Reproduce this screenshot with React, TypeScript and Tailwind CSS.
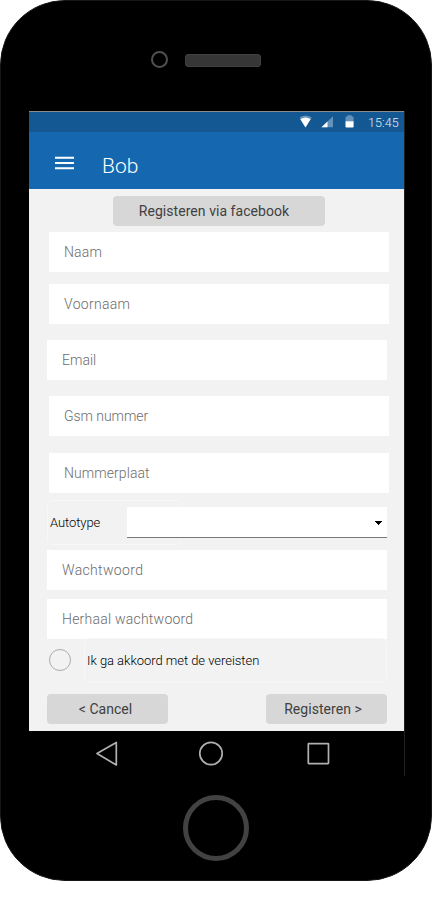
import React from "react";

function Field({ label, className }: { label: string; className: string }) {
  return (
    <div className={`flex h-10 w-[340px] shrink-0 items-center bg-white pl-[15px] text-[14px] font-light text-[#6c6c6c] ${className}`}>
      <span>{label}</span>
    </div>
  );
}

function StatusBar() {
  return (
    <div className="flex h-[21px] shrink-0 items-center justify-end border-t border-[#8c8c8c] bg-[#135892] pr-[5px] text-white">
      <svg width="69" height="20" viewBox="300 112 69 20">
        <path d="M299.2 117.6Q305.5 113.4 311.8 117.6L305.5 127Z" fill="#fff" opacity=".35" />
        <path d="M300.4 119.2Q305.5 116 310.6 119.2L305.5 127.5Z" fill="#fff" />
        <path d="M321.5 127.3L333 116.2V127.3Z" fill="#fff" opacity=".35" />
        <path d="M321.5 127.3L327.5 121.5V127.3Z" fill="#fff" />
        <path d="M345.5 121.5V117.5Q345.5 116.5 346.5 116.5H347.3V115.3H351.7V116.5H352.8Q353.6 116.5 353.6 117.5V121.5Z" fill="#fff" opacity=".35" />
        <path d="M345.5 121.2H353.6V126.5Q353.6 127.4 352.7 127.4H346.4Q345.5 127.4 345.5 126.5Z" fill="#fff" />
      </svg>
      <span className="-ml-[1px] mt-[2px] w-[31px] whitespace-nowrap text-[12.5px] font-light leading-[18px] tracking-[0.1px] text-[#e3edf5]">15:45</span>
    </div>
  );
}

export default function App() {
  return (
    <div className="h-[901px] w-[432px] overflow-hidden bg-white font-['Roboto',sans-serif]">
      <div className="flex h-[881px] w-[432px] flex-col rounded-[65px] border border-[#161616] bg-black">
        <header className="flex h-[110px] shrink-0 items-start pl-[150px] pt-[50px]">
          <div className="size-[17px] rounded-full border-[2.5px] border-[#505050]" />
          <div className="ml-[17px] mt-[3px] h-[13px] w-[76px] rounded-[3px] border border-[#414141] bg-[#363636]" />
        </header>

        <main className="ml-[28px] flex h-[665px] w-[376px] shrink-0 flex-col border-r border-[#222]">
          <StatusBar />
          <div className="flex h-[57px] shrink-0 items-center bg-[#1568b0] pl-[26px] text-white">
            <svg width="20" height="14" viewBox="0 0 20 14" className="mt-[4px]">
              <path d="M0 1.7H19M0 7H19M0 12.3H19" stroke="#fff" strokeWidth="2.1" />
            </svg>
            <span className="ml-[27px] mt-[11px] text-[21px] font-light leading-none">Bob</span>
          </div>

          <div className="flex h-[542px] shrink-0 flex-col items-start bg-[#f2f2f2] pl-[18px] pt-[7px]">
            <button className="ml-[66px] h-[30px] w-[212px] shrink-0 rounded-[4px] bg-[#d7d7d7] pr-[10px] text-[14px] tracking-[0.05px] text-[#404040]">
              Registeren via facebook
            </button>
            <Field label="Naam" className="ml-[2px] mt-[6px] tracking-[0.14px]" />
            <Field label="Voornaam" className="ml-[2px] mt-[12px] tracking-[0.3px]" />
            <Field label="Email" className="mt-[16px]" />
            <Field label="Gsm nummer" className="ml-[2px] mt-[16px] tracking-[-0.05px]" />
            <Field label="Nummerplaat" className="ml-[2px] mt-[17px] tracking-[0.07px]" />

            <div className="relative mt-[7px] flex h-[45px] w-[340px] shrink-0 items-center">
              <div className="absolute inset-y-0 left-0 w-[135px] rounded-[5px] border border-[#f7f7f7]" />
              <label className="flex h-[45px] w-[80px] items-center pl-[3px] text-[13px] font-light tracking-[-0.08px] text-black">
                Autotype
              </label>
              <div className="relative flex h-[31px] w-[260px] items-center justify-end border-b border-[#777] bg-white pr-[5px]">
                <svg width="7" height="4" viewBox="0 0 7 4" className="mt-[1px]" shapeRendering="crispEdges">
                  <path d="M0 0H7V1H6V2H5V3H4V4H3V3H2V2H1V1H0Z" fill="#000" />
                </svg>
              </div>
            </div>

            <Field label="Wachtwoord" className="mt-[5px] tracking-[0.34px]" />
            <Field label="Herhaal wachtwoord" className="mt-[9px] tracking-[0.23px]" />

            <div className="mt-[-1px] flex h-[45px] w-[340px] shrink-0 items-center">
              <div className="mb-[1px] ml-[2px] size-[22px] rounded-full border border-[#aaa]" />
              <label className="ml-[13px] flex h-[45px] flex-1 items-center rounded-[5px] border border-[#f7f7f7] bg-[#f2f2f2] pl-[2px] text-[13px] font-light tracking-[-0.04px] text-black">
                Ik ga akkoord met de vereisten
              </label>
            </div>

            <div className="mt-[11px] flex w-[340px] justify-between text-[14px] tracking-[0.05px] text-[#404040]">
              <button className="h-[30px] w-[121px] rounded-[4px] bg-[#d7d7d7] pr-[4px]">&lt; Cancel</button>
              <button className="h-[30px] w-[121px] rounded-[4px] bg-[#d7d7d7] pr-[7px]">Registeren &gt;</button>
            </div>
          </div>

          <nav className="flex h-[45px] shrink-0 items-center bg-black">
            <svg width="375" height="45" viewBox="29 731 375 45" fill="none" stroke="#b0b0b0" strokeWidth="1.7" strokeLinejoin="round">
              <path d="M97 753.5L116.3 742.5V765Z" />
              <circle cx="211" cy="753.5" r="11.2" />
              <rect x="308.3" y="743.6" width="20.2" height="20" rx="0.5" />
            </svg>
          </nav>
        </main>

        <footer className="flex shrink-0 pl-[182px] pt-[19px]">
          <div className="size-[66px] rounded-full border-[5px] border-[#424242]" />
        </footer>
      </div>
    </div>
  );
}
